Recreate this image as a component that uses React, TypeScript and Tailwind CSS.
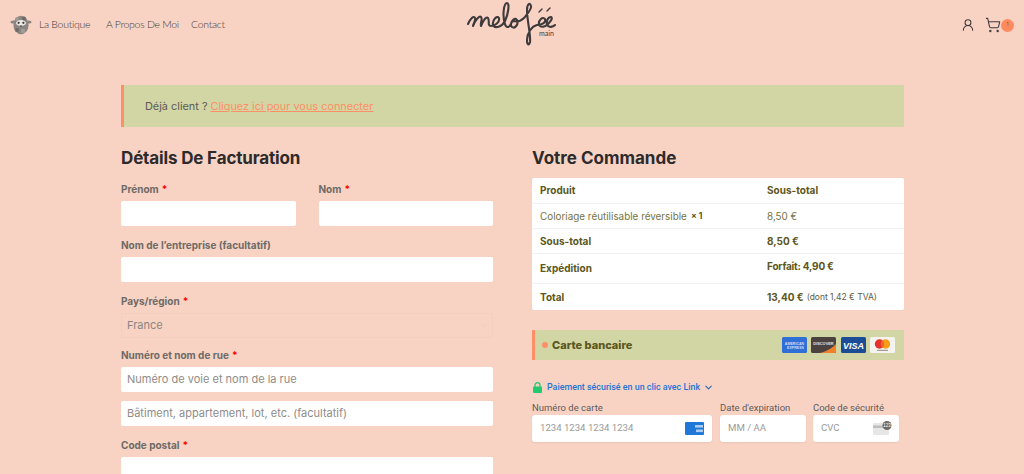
import { ChevronDown, ShoppingCart, UserRound } from "lucide-react";

const poppins = "font-['Inter','Liberation_Sans',sans-serif]";

function Label({ text, req = true }: { text: string; req?: boolean }) {
  return (
    <div className="h-[12px] flex items-center text-[10px] leading-[12px] font-bold text-[#6e6a66] whitespace-nowrap">
      {text}
      {req && <span className="text-[#ff0000] ml-[3px]">*</span>}
    </div>
  );
}

function Field({ placeholder = "" }: { placeholder?: string }) {
  return (
    <div className="h-[25px] bg-white rounded-[2px] px-[6px] flex items-center text-[11px] text-[#8f8b88] whitespace-nowrap">
      {placeholder}
    </div>
  );
}

function Row({ h, left, right, top = false, border = true, thin = false }: { h: string; left: React.ReactNode; right: React.ReactNode; top?: boolean; border?: boolean; thin?: boolean }) {
  return (
    <div className={`${h} flex ${border ? "border-b border-[#f1f1f1]" : ""} ${thin ? "text-[9.9px] font-normal text-[#77733f]" : "text-[10px] font-bold text-[#5c5620]"}`}>
      <div className="w-[235px] pl-[8px] flex items-center whitespace-nowrap">{left}</div>
      <div className={`flex-1 flex whitespace-nowrap ${top ? "items-start pt-[5px] tracking-[-0.2px]" : "items-center"}`}>{right}</div>
    </div>
  );
}

function Sheep() {
  return (
    <svg width="22" height="22" viewBox="0 0 22 22" className="shrink-0">
      <ellipse cx="3.5" cy="8" rx="3" ry="1.6" fill="#8a8481" />
      <ellipse cx="18.5" cy="8" rx="3" ry="1.6" fill="#8a8481" />
      <ellipse cx="11" cy="11" rx="7.6" ry="9.2" fill="#8c8683" />
      <circle cx="7" cy="5" r="2" fill="#a09a97" />
      <circle cx="14" cy="4.5" r="2" fill="#6f6a67" />
      <circle cx="7" cy="16" r="2" fill="#6f6a67" />
      <circle cx="13" cy="17" r="2.2" fill="#a39d9a" />
      <ellipse cx="11" cy="9" rx="5" ry="3" fill="#ece7e4" />
      <circle cx="8.6" cy="8.8" r="1.1" fill="#3a3634" />
      <circle cx="13.4" cy="8.8" r="1.1" fill="#3a3634" />
      <path d="M9.5 11.5h3l-1.5 1.5z" fill="#4a4543" />
    </svg>
  );
}

function Logo() {
  return (
    <div className="relative w-[140px] h-[50px] -ml-[2px]">
      <svg width="140" height="50" viewBox="0 0 140 50" fill="none" stroke="#3f3a3b" strokeWidth="2.1" strokeLinecap="round" strokeLinejoin="round">
        <path d="M28 24C30 19 34 15 35 18C36 20 33 24 33 26C35 21 39 15 41 17C43 19 40 23 41 26C43 21 46 16 48 18C50 21 47 26 51 26C55 26 60 22 59 18C57 15 52 20 53 25C55 29 62 27 65 21C68 15 70 3 67 3C64 3 62 15 65 24C66 28 69 28 71 24C72 20 75 17 77 20C79 24 75 29 72 27C70 25 71 21 74 21C78 22 82 20 84 18C88 13 92 9 91 6C90 2 87 4 87 10C87 20 91 36 90 42C89 46 87 45 87 40C87 33 92 26 97 25C103 25 106 22 105 19C103 16 98 20 99 25C101 28 105 27 108 24C111 21 113 18 111 17C108 17 106 21 107 25C109 28 113 27 115 25" />
        <path d="M99 12L102 9M107 11L110 8" strokeWidth="1.4" />
      </svg>
      <span className="absolute left-[99px] top-[29px] text-[7px] leading-[8px] text-[#3f3a3b] font-['Lato',sans-serif]">main</span>
    </div>
  );
}

function Amex() {
  return (
    <svg width="25" height="16" viewBox="0 0 25 16">
      <rect width="25" height="16" rx="1.5" fill="#2f6fd6" />
      <text x="12.5" y="7.5" textAnchor="middle" fontSize="3.6" fontWeight="700" fontFamily="Liberation Sans" fill="#cfdcf5">AMERICAN</text>
      <text x="13.5" y="12" textAnchor="middle" fontSize="3.6" fontWeight="700" fontFamily="Liberation Sans" fill="#cfdcf5">EXPRESS</text>
    </svg>
  );
}

function Discover() {
  return (
    <svg width="25" height="16" viewBox="0 0 25 16">
      <rect width="25" height="16" rx="1.5" fill="#4b4240" />
      <path d="M9 16C17 14 22 10 25 7V14.5A1.5 1.5 0 0 1 23.5 16Z" fill="#f0802a" />
      <text x="12.5" y="8" textAnchor="middle" fontSize="3.9" fontWeight="700" fontFamily="Liberation Sans" fill="#e8e2e0">DISCOVER</text>
    </svg>
  );
}

function Visa() {
  return (
    <svg width="25" height="16" viewBox="0 0 25 16">
      <rect width="25" height="16" rx="1.5" fill="#1d4c96" />
      <text x="12.5" y="11.5" textAnchor="middle" fontSize="9" fontWeight="800" fontStyle="italic" fontFamily="Liberation Sans" fill="#ffffff">VISA</text>
    </svg>
  );
}

function Master() {
  return (
    <svg width="25" height="16" viewBox="0 0 25 16">
      <rect width="25" height="16" rx="1.5" fill="#f5f3ee" />
      <circle cx="9.5" cy="7" r="4.7" fill="#e5322d" />
      <circle cx="15.5" cy="7" r="4.7" fill="#f59c1a" />
      <path d="M12.5 3.4a4.7 4.7 0 0 1 0 7.2a4.7 4.7 0 0 1 0-7.2z" fill="#f2641f" />
      <rect x="7" y="12.8" width="11" height="1" fill="#8d8a85" />
    </svg>
  );
}

function CardField({ label, placeholder, width, icon }: { label: string; placeholder: string; width: string; icon?: React.ReactNode }) {
  return (
    <div className={`${width} flex flex-col`}>
      <div className="h-[13px] text-[9.5px] leading-[13px] text-[#5d5a58] whitespace-nowrap font-['Roboto',sans-serif]">{label}</div>
      <div className="mt-[1px] h-[27px] bg-white rounded-[3px] pl-[8px] pr-[8px] flex items-center justify-between text-[9.6px] text-[#9a9a9a] whitespace-nowrap font-['Roboto',sans-serif] shadow-[0_1px_2px_rgba(0,0,0,0.06)]">
        <span>{placeholder}</span>
        {icon}
      </div>
    </div>
  );
}

export default function App() {
  return (
    <div className={`w-[1024px] h-[474px] overflow-hidden bg-[#f8d3c4] ${poppins}`}>
      <header className="h-[50px] grid grid-cols-[1fr_140px_1fr] items-center pl-[10px] pr-[10px]">
        <nav className="flex items-center text-[#3f3a3b] text-[10.5px] tracking-[-0.3px] font-light font-['Lato',sans-serif] whitespace-nowrap">
          <Sheep />
          <span className="ml-[7px] w-[67px]">La Boutique</span>
          <span className="w-[85px]">A Propos De Moi</span>
          <span>Contact</span>
        </nav>
        <Logo />
        <div className="flex items-center justify-end text-[#3f3a3b]">
          <UserRound size={14} strokeWidth={1.8} />
          <ShoppingCart size={16} strokeWidth={1.6} className="ml-[10px]" />
          <span className="w-[13px] h-[13px] rounded-full bg-[#ff8a5f] text-[#7a5a20] text-[5px] flex items-center justify-center">1</span>
        </div>
      </header>

      <main className="w-[783px] ml-[121px] mt-[35px]">
        <div className="h-[42px] bg-[#d2d6a4] border-l-[3px] border-[#ff8f66] pl-[21px] pt-[1px] flex items-center text-[10.9px] text-[#5d5a58]">
          Déjà client ?<span className="ml-[3px] text-[#ff8f66] underline">Cliquez ici pour vous connecter</span>
        </div>

        <div className="mt-[20px] flex gap-[39px] items-start">
          <section className="w-[372px] flex flex-col">
            <h2 className="h-[22px] pt-[2px] flex items-center text-[17px] tracking-[-0.15px] font-bold text-[#2d2a2b] whitespace-nowrap">Détails De Facturation</h2>
            <div className="mt-[14px] flex gap-[23px]">
              <div className="flex-1 flex flex-col gap-[6px]">
                <Label text="Prénom" />
                <Field />
              </div>
              <div className="flex-1 flex flex-col gap-[6px]">
                <Label text="Nom" />
                <Field />
              </div>
            </div>
            <div className="mt-[13px] flex flex-col gap-[6px]">
              <Label text="Nom de l’entreprise (facultatif)" req={false} />
              <Field />
            </div>
            <div className="mt-[13px] flex flex-col gap-[6px]">
              <Label text="Pays/région" />
              <div className="h-[25px] rounded-[2px] border border-[#f3cfbf] pl-[5px] pr-[4px] flex items-center justify-between text-[11px] text-[#8a8580]">
                France
                <ChevronDown size={7} className="text-[#e6c5b6]" />
              </div>
            </div>
            <div className="mt-[11px] flex flex-col gap-[6px]">
              <Label text="Numéro et nom de rue" />
              <Field placeholder="Numéro de voie et nom de la rue" />
            </div>
            <div className="mt-[9px]">
              <Field placeholder="Bâtiment, appartement, lot, etc. (facultatif)" />
            </div>
            <div className="mt-[13px] flex flex-col gap-[6px]">
              <Label text="Code postal" />
              <Field />
            </div>
          </section>

          <section className="w-[372px] flex flex-col">
            <h2 className="h-[22px] pt-[2px] flex items-center text-[17px] font-bold text-[#2d2a2b] whitespace-nowrap">Votre Commande</h2>
            <div className="mt-[9px] bg-white rounded-[2px] flex flex-col">
              <Row h="h-[26px]" left="Produit" right="Sous-total" />
              <Row h="h-[25px]" thin left={<>Coloriage réutilisable réversible<b className="ml-[4px] text-[#5c5620] text-[8.5px]">× 1</b></>} right="8,50 €" />
              <Row h="h-[25px]" left="Sous-total" right="8,50 €" />
              <Row h="h-[30px]" top left="Expédition" right="Forfait: 4,90 €" />
              <Row h="h-[26px]" border={false} left="Total" right={<>13,40 €<span className="ml-[3px] font-normal text-[8.5px] text-[#5c5a40]">(dont 1,42 € TVA)</span></>} />
            </div>

            <div className="mt-[20px] h-[30px] bg-[#d2d6a4] border-l-[3px] border-[#ff8f66] flex items-center pl-[7px] pr-[9px]">
              <span className="w-[6px] h-[6px] rounded-full bg-[#ff8f66]" />
              <span className="ml-[4px] text-[11px] font-extrabold text-[#5c5620]">Carte bancaire</span>
              <div className="ml-auto flex items-center gap-[4.5px]">
                <Amex />
                <Discover />
                <Visa />
                <Master />
              </div>
            </div>

            <div className="mt-[21px] h-[13px] flex items-center pl-[1px] text-[#1f74d4] text-[8.9px] font-['Roboto',sans-serif] font-medium whitespace-nowrap">
              <svg width="9" height="11" viewBox="0 0 9 11">
                <path d="M2 5V3.2a2.5 2.5 0 0 1 5 0V5" fill="none" stroke="#22c96f" strokeWidth="1.3" />
                <rect y="4.5" width="9" height="6.5" rx="1" fill="#22c96f" />
              </svg>
              <span className="ml-[5px]">Paiement sécurisé en un clic avec Link</span>
              <ChevronDown size={11} strokeWidth={2.2} className="ml-[3px] text-[#1a62b5]" />
            </div>

            <div className="mt-[7px] flex">
              <CardField
                label="Numéro de carte"
                placeholder="1234 1234 1234 1234"
                width="w-[180px]"
                icon={
                  <svg width="19" height="13" viewBox="0 0 19 13">
                    <rect width="19" height="13" rx="1" fill="#1f78d8" />
                    <rect x="10" y="3" width="8" height="2.6" fill="#a9cdf2" />
                    <rect x="11" y="7.5" width="7" height="2.6" fill="#a9cdf2" />
                  </svg>
                }
              />
              <CardField label="Date d'expiration" placeholder="MM / AA" width="w-[86px] ml-[8px]" />
              <CardField
                label="Code de sécurité"
                placeholder="CVC"
                width="w-[86px] ml-[7px]"
                icon={
                  <svg width="19" height="15" viewBox="0 0 19 15" className="mr-[-1px]">
                    <rect y="2" width="16" height="12" rx="1" fill="#e6e6e6" />
                    <rect y="4.5" width="16" height="2.5" fill="#bdbdbd" />
                    <circle cx="14" cy="4.5" r="4.5" fill="#6f6a66" />
                    <text x="14" y="6.3" textAnchor="middle" fontSize="4.5" fill="#fff" fontFamily="Liberation Sans">123</text>
                  </svg>
                }
              />
            </div>
          </section>
        </div>
      </main>
    </div>
  );
}
